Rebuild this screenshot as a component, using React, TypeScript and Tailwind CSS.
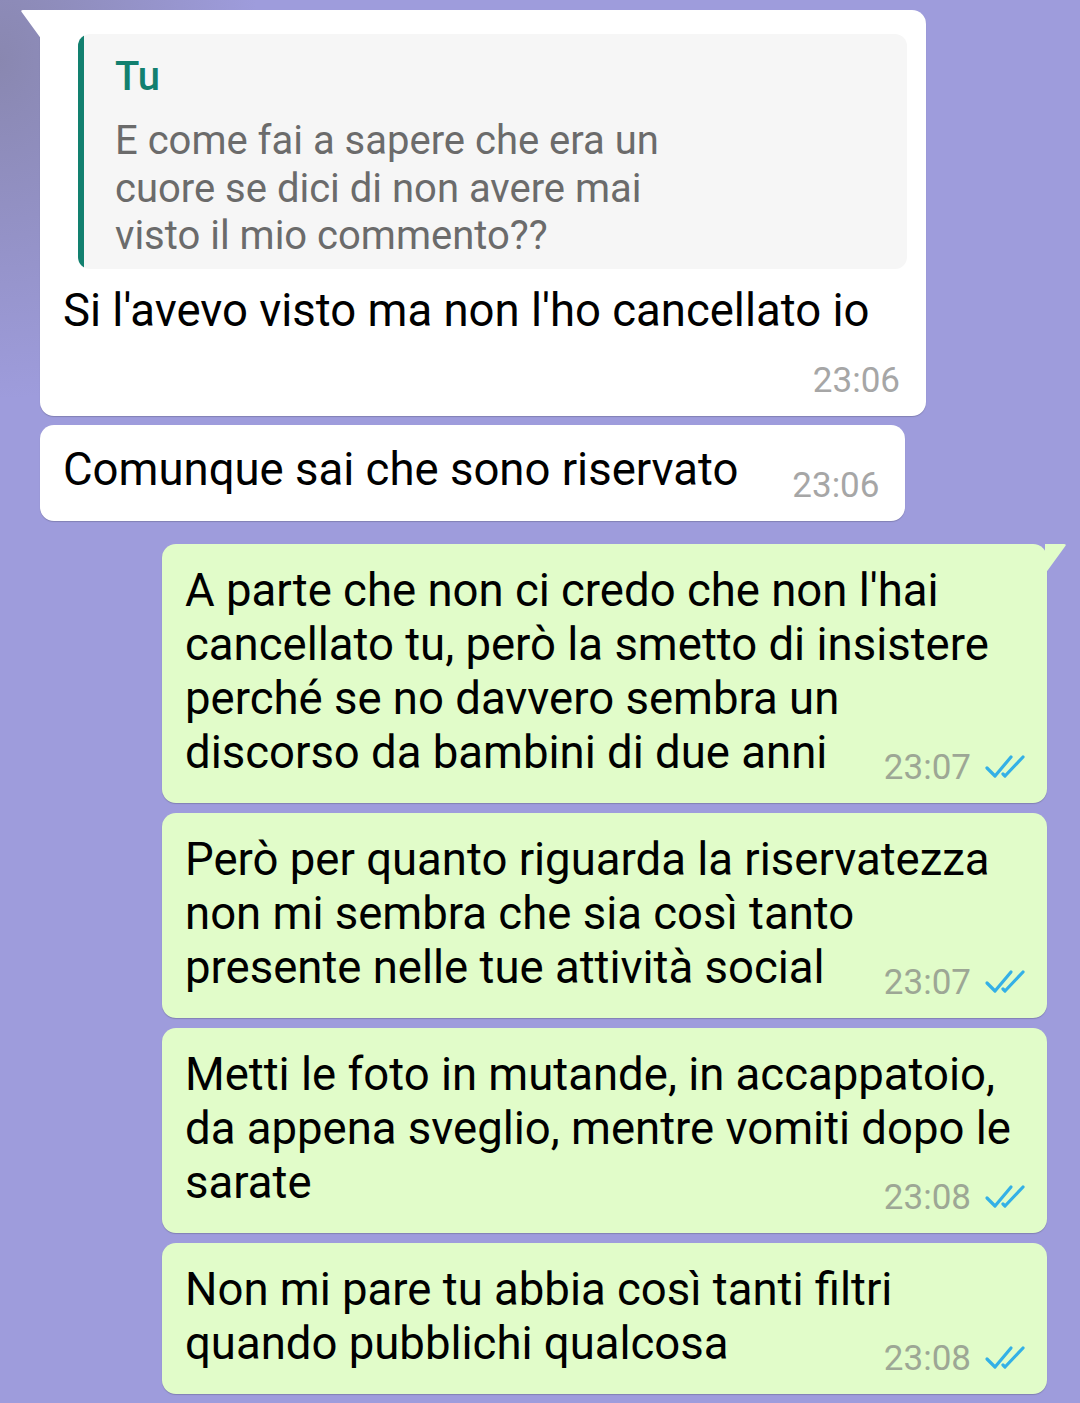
import React from "react";

function Ticks() {
  return (
    <svg width="44" height="26" viewBox="0 0 44 26" className="ml-[13px] mb-[2px]" fill="none">
      <path d="M3 14 L11 22 L27 3" stroke="#34b0e6" strokeWidth="3.2" strokeLinecap="round" strokeLinejoin="round" />
      <path d="M19 20 L21 22 L39 3" stroke="#34b0e6" strokeWidth="3.2" strokeLinecap="round" strokeLinejoin="round" />
    </svg>
  );
}

function TailLeft() {
  return (
    <svg width="22" height="32" viewBox="0 0 22 32" className="absolute -left-[20px] top-0">
      <path d="M22 0 L3 0 Q0 0 2 2.5 L22 30 Z" fill="#ffffff" />
    </svg>
  );
}

function TailRight({ color }: { color: string }) {
  return (
    <svg width="22" height="32" viewBox="0 0 22 32" className="absolute -right-[20px] top-0">
      <path d="M0 0 L19 0 Q22 0 20 2.5 L0 30 Z" fill={color} />
    </svg>
  );
}

function Time({ t, ticks, green }: { t: string; ticks?: boolean; green?: boolean }) {
  return (
    <div
      className={
        "absolute bottom-[17px] flex items-center text-[35px] leading-[36px] " +
        (green ? "right-[19px] text-[#9da795]" : "right-[26px] text-[#a6a6a6]")
      }
    >
      <span>{t}</span>
      {ticks && <Ticks />}
    </div>
  );
}

function GreenBubble({ lines, t }: { lines: string[]; t: string }) {
  return (
    <div className="relative ml-[162px] w-[885px] rounded-[14px] bg-[#e1fcc9] pl-[23px] pr-[20px] pt-[20px] pb-[23px] shadow-[0_1px_1px_rgba(0,0,0,0.18)]">
      <p className="text-[45.5px] leading-[54px] text-black">
        {lines.map((l, i) => (
          <React.Fragment key={i}>
            {l}
            {i < lines.length - 1 ? <br /> : null}
          </React.Fragment>
        ))}
        <span className="inline-block w-[190px]" />
      </p>
      <Time t={t} ticks green />
    </div>
  );
}

export default function App() {
  return (
    <div className="relative h-[1403px] w-[1080px] overflow-hidden bg-[#9e9cdc] font-['Roboto',sans-serif]">
      <div className="pointer-events-none absolute inset-0 bg-[radial-gradient(ellipse_260px_340px_at_0px_60px,rgba(120,118,140,0.55),rgba(120,118,140,0))]" />
      <div className="relative flex flex-col pt-[10px]">
        {/* Bubble 1 */}
        <div className="relative ml-[40px] w-[886px] rounded-[14px] rounded-tl-none bg-white pb-[24px] shadow-[0_1px_1px_rgba(0,0,0,0.18)]">
          <TailLeft />
          <div className="ml-[38px] mr-[19px] mt-[24px] flex overflow-hidden rounded-[12px] bg-[#f6f6f6]">
            <div className="w-[6px] shrink-0 bg-[#12806f]" />
            <div className="pl-[31px] pt-[21px] pb-[9px]">
              <div className="text-[40px] font-medium leading-[44px] text-[#12806f]">Tu</div>
              <div className="mt-[18px] text-[40px] leading-[47.5px] text-[#6b6b6b]">
                E come fai a sapere che era un
                <br />
                cuore se dici di non avere mai
                <br />
                visto il mio commento??
              </div>
            </div>
          </div>
          <p className="mt-[15px] pl-[23px] pr-[23px] text-[45.5px] leading-[54px] text-black">
            Si l'avevo visto ma non l'ho cancellato io
            <span className="inline-block w-[140px]" />
          </p>
          <Time t="23:06" />
        </div>

        {/* Bubble 2 */}
        <div className="relative ml-[40px] mt-[9px] self-start rounded-[14px] bg-white pl-[23px] pr-[23px] pt-[18px] pb-[24px] shadow-[0_1px_1px_rgba(0,0,0,0.18)]">
          <p className="whitespace-nowrap text-[45.5px] leading-[54px] text-black">
            Comunque sai che sono riservato
            <span className="inline-block w-[144px]" />
          </p>
          <Time t="23:06" />
        </div>

        {/* Green bubbles */}
        <div className="relative mt-[23px]">
          <GreenBubble
            t="23:07"
            lines={[
              "A parte che non ci credo che non l'hai",
              "cancellato tu, però la smetto di insistere",
              "perché se no davvero sembra un",
              "discorso da bambini di due anni",
            ]}
          />
          <div className="absolute left-[1047px] top-0">
            <TailRight color="#e1fcc9" />
          </div>
        </div>
        <div className="mt-[10px]">
          <GreenBubble
            t="23:07"
            lines={[
              "Però per quanto riguarda la riservatezza",
              "non mi sembra che sia così tanto",
              "presente nelle tue attività social",
            ]}
          />
        </div>
        <div className="mt-[10px]">
          <GreenBubble
            t="23:08"
            lines={[
              "Metti le foto in mutande, in accappatoio,",
              "da appena sveglio, mentre vomiti dopo le",
              "sarate",
            ]}
          />
        </div>
        <div className="mt-[10px]">
          <GreenBubble
            t="23:08"
            lines={["Non mi pare tu abbia così tanti filtri", "quando pubblichi qualcosa"]}
          />
        </div>
      </div>
    </div>
  );
}
